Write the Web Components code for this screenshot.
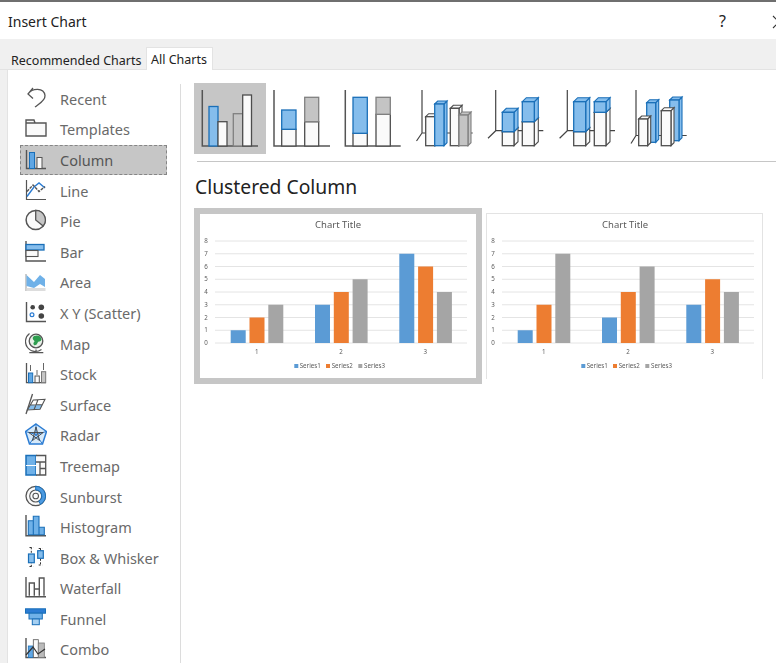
<!DOCTYPE html>
<html>
<head>
<meta charset="utf-8">
<title>Insert Chart</title>
<style>
  html, body { margin: 0; height: 100%; background: #fff; overflow: hidden; }
</style>
</head>
<body>
<insert-chart-dialog></insert-chart-dialog>
<script>
const FONT = '"Noto Sans", "Open Sans", "Liberation Sans", sans-serif';
const BLUE = '#85bdec';
const BLUE_LINE = '#1a6fb8';
const DARK = '#555';

// nav icons, drawn in a 22x24 box
const NAV_ICONS = {
  recent: `<path d="M8 1 3 7l5 4.500M3 7C7 1 19 0 20 8.500c.5 5-6 8.500-10 11.500" fill="none" stroke="${DARK}" stroke-width="1.300"/>`,
  templates: `<path d="M1 3h8l1 3h11v13H1zM1 6h9" fill="#fafafa" stroke="${DARK}" stroke-width="1.400"/>`,
  column: `<path d="M1.500 2v18.500H21" fill="none" stroke="${DARK}" stroke-width="1.400"/>
    <rect x="4.500" y="4.500" width="5" height="16" fill="#5fa6e4" stroke="${BLUE_LINE}"/>
    <rect x="12" y="9.500" width="5" height="11" fill="#fafafa" stroke="${DARK}"/>`,
  line: `<path d="M1.500 1v19.500H21" fill="none" stroke="${DARK}" stroke-width="1.200"/>
    <path d="M2 17.500 9 8l5-4 6 5" fill="none" stroke="#2b7cd3" stroke-width="1.400"/>
    <path d="M2 12.500 8 6l6 6.500L20 7.500" fill="none" stroke="${DARK}" stroke-width="1.400" stroke-dasharray="3 1"/>`,
  pie: `<circle cx="10.700" cy="11" r="9.600" fill="#fafafa" stroke="${DARK}" stroke-width="1.500"/>
    <path d="M10.700 11V1.400A9.600 9.600 0 0 1 18.200 17Z" fill="#c6c6c6" stroke="${DARK}" stroke-width="1.300"/>`,
  bar: `<path d="M1 1v20h20" fill="none" stroke="${DARK}" stroke-width="1.400"/>
    <rect x="1" y="4.500" width="18" height="5.500" fill="${BLUE}" stroke="${BLUE_LINE}" stroke-width="1.300"/>
    <rect x="1" y="10.500" width="12" height="6" fill="#fafafa" stroke="${DARK}" stroke-width="1.100"/>`,
  area: `<path d="M1 4v17" stroke="#999" fill="none"/>
    <path d="M1.500 18h19v3h-19z" fill="#ddd"/>
    <path d="M1.500 5 9 12l6-7 5 4v8l-5-3-6 4-7.500-2z" fill="#6fb1e8"/>`,
  scatter: `<path d="M1.500 1v19.500H21" fill="none" stroke="${DARK}" stroke-width="1.400"/>
    <circle cx="7.700" cy="6.300" r="2.300" fill="#444"/><circle cx="16.300" cy="6.300" r="2.800" fill="#444"/>
    <circle cx="16.300" cy="15" r="2.800" fill="#444"/><circle cx="7" cy="13.700" r="1.900" fill="#fff" stroke="#2b7cd3" stroke-width="1.200"/>`,
  map: `<circle cx="11" cy="9" r="6.800" fill="#e8f0e8" stroke="${DARK}" stroke-width="1.300"/>
    <path d="M9 4c4-1.500 7 0 7.500 3.500-1 3-3 1-4 3.500s-3.500 3-4 1 2-2 .5-3.500-2-3 0-4.500z" fill="#2e9e4f"/>
    <path d="M4.500 1.500a10 10 0 0 0 12 16M11 17.500v3M4.300 20.700h14" fill="none" stroke="${DARK}" stroke-width="1.200"/>`,
  stock: `<path d="M1.500 1v19.700H21" fill="none" stroke="${DARK}" stroke-width="1.300"/>
    <path d="M5.500 3v6M12 8v5M18.500 1v7" fill="none" stroke="${DARK}" stroke-width=".9"/>
    <rect x="3.500" y="11" width="4.200" height="9.700" fill="#5fa6e4" stroke="${BLUE_LINE}"/>
    <rect x="10" y="14" width="4.300" height="6.700" fill="#fafafa" stroke="${DARK}"/>
    <rect x="16.500" y="9.700" width="4.200" height="11" fill="#c6c6c6" stroke="#777"/>`,
  surface: `<path d="M7.500 1 1 21" fill="none" stroke="${DARK}" stroke-width="1.300"/>
    <path d="M5.500 12h12l-2.500 4.500H2.300z" fill="${BLUE}"/>
    <path d="M8.300 7 20 6.300 15 16.300 2.300 17zM5.500 12l12-.500M13 6.700 9 16.800" fill="none" stroke="${DARK}" stroke-width="1.100"/>`,
  radar: `<path d="m11 1 10.500 7.500-4 12.500h-13L.5 8.500z" fill="#d6e9f9" stroke="#2b7cd3" stroke-width="1.500"/>
    <path d="M11 1v10.500M21.500 8.500 11 11.500M17.500 21 11 11.500M4.500 21 11 11.500M.5 8.500 11 11.500" fill="none" stroke="#2b7cd3"/>
    <path d="m11 4 3.500 13.500L3.800 9.500h14.400L7.500 17.500z" fill="none" stroke="#444" stroke-width=".9"/>`,
  treemap: `<rect x="1" y="1.500" width="10" height="19.500" fill="#6fb1e8" stroke="${BLUE_LINE}" stroke-width="1.500"/>
    <path d="M1 11.500h10" stroke="#fff" fill="none"/>
    <path d="M11 1.500h9.700V21H11M11 8h9.700M15 8v13M15 14.500h5.700" fill="#fafafa" stroke="${DARK}" stroke-width="1.300"/>`,
  sunburst: `<circle cx="10.700" cy="11" r="9.700" fill="#fafafa" stroke="${DARK}" stroke-width="1.300"/>
    <circle cx="10.700" cy="11" r="6" fill="none" stroke="${DARK}" stroke-width="1.100"/>
    <circle cx="10.700" cy="11" r="2.800" fill="none" stroke="${DARK}" stroke-width="1.100"/>
    <path d="M10.700 1.300A9.700 9.700 0 0 1 15.500 19.500L13.700 16.200A6 6 0 0 0 10.700 5Z" fill="#4d9ae0" stroke="${BLUE_LINE}"/>`,
  histogram: `<path d="M1 0v20.700h20" fill="none" stroke="${DARK}" stroke-width="1.400"/>
    <path d="M3.300 19.700V5.700h5v14zM8.300 19.700V1.300H14v18.400zM14 19.700v-7.400h5.300v7.400z" fill="#6fb1e8" stroke="${BLUE_LINE}" stroke-width="1.100"/>`,
  box: `<path d="M6.300 1.300v19.400M15.500 2.300V19M4.500 1.500h3.600M4.500 20.500h3.600M13.700 2.500h3.600M13.700 19h3.600" fill="none" stroke="#333" stroke-dasharray="2 1.500"/>
    <rect x="3.500" y="8" width="5.800" height="8.700" fill="${BLUE}" stroke="${BLUE_LINE}" stroke-width="1.200"/>
    <rect x="12.700" y="4.700" width="5.600" height="7.600" fill="${BLUE}" stroke="${BLUE_LINE}" stroke-width="1.200"/>`,
  waterfall: `<path d="M1 1v19.700h20M4.300 19.700V7H9.300V19.700M9.300 13H14.300V2H19V19.700M14.300 13V19.700" fill="none" stroke="${DARK}" stroke-width="1.400"/>`,
  funnel: `<rect x="0.500" y="1.800" width="20" height="4.400" fill="#2b7cd3" stroke="${BLUE_LINE}"/>
    <rect x="4" y="6.200" width="13.300" height="5.800" fill="#6fb1e8" stroke="${BLUE_LINE}"/>
    <rect x="7.300" y="12" width="7" height="5.700" fill="#a6d0f2" stroke="${BLUE_LINE}"/>`,
  combo: `<path d="M1 1v19.500h20" fill="none" stroke="${DARK}" stroke-width="1.400"/>
    <rect x="3.300" y="9" width="5" height="11.500" fill="#5fa6e4" stroke="${BLUE_LINE}" stroke-width=".8"/>
    <rect x="8.300" y="2.700" width="5" height="17.800" fill="#fafafa" stroke="${DARK}" stroke-width=".8"/>
    <rect x="13.300" y="6" width="6" height="14.500" fill="#bbb" stroke="#777" stroke-width=".8"/>
    <path d="m1 18 7-8 5 7 7-5" fill="none" stroke="#333" stroke-width="1.200"/>`
};

const NAV_ITEMS = [
  ['recent', 'Recent'], ['templates', 'Templates'], ['column', 'Column'], ['line', 'Line'],
  ['pie', 'Pie'], ['bar', 'Bar'], ['area', 'Area'], ['scatter', 'X Y (Scatter)'], ['map', 'Map'],
  ['stock', 'Stock'], ['surface', 'Surface'], ['radar', 'Radar'], ['treemap', 'Treemap'],
  ['sunburst', 'Sunburst'], ['histogram', 'Histogram'], ['box', 'Box & Whisker'],
  ['waterfall', 'Waterfall'], ['funnel', 'Funnel'], ['combo', 'Combo']
];

const box2d = (x, y, w, h, fill, stroke = '#4d4d4d') =>
  `<rect x="${x}" y="${y}" width="${w}" height="${h}" fill="${fill}" stroke="${stroke}" stroke-width="1.300"/>`;

const box3d = (x, y, w, h, d, fill, stroke = '#4d4d4d') => `
  <path d="M${x + w} ${y}l${d} ${-d}v${h}l${-d} ${d}z" fill="${fill}" stroke="${stroke}" stroke-width="1.100"/>
  <path d="M${x} ${y}l${d} ${-d}h${w}l${-d} ${d}z" fill="${fill}" stroke="${stroke}" stroke-width="1.100"/>
  ${box2d(x, y, w, h, fill, stroke)}`;

const axes2d = (x, top, right) =>
  `<path d="M${x} ${top}V146H${right}" fill="none" stroke="#555" stroke-width="1.500"/>`;

const axes3d = (x, y, right, dx, dy) =>
  `<path d="M${x} 90V${y}H${right}M${x} ${y}l${-dx} ${dy}" fill="none" stroke="#444" stroke-width="1.200"/>`;

// subtype thumbs, in reference coordinates so the numbers stay readable
const THUMBS = [
  { x: 194, selected: true, draw: axes2d(202.300, 90, 258) +
      box2d(209, 106.500, 9, 39.500, BLUE, BLUE_LINE) + box2d(218, 121.700, 9, 24.300, '#fafafa') +
      box2d(233.300, 113.700, 9.400, 32.300, '#c4c4c4', '#808080') + box2d(242.700, 95, 8.800, 51, '#fafafa') },
  { x: 266, draw: axes2d(274, 90, 330) +
      box2d(281.700, 129.300, 14.300, 16.700, '#fafafa') + box2d(281.700, 110, 14.300, 19.300, BLUE, BLUE_LINE) +
      box2d(304.700, 121.700, 14, 24.300, '#fafafa') + box2d(304.700, 97.300, 14, 24.400, '#c4c4c4', '#808080') },
  { x: 337, draw: axes2d(345.300, 90, 400.700) +
      box2d(353, 133.300, 14.300, 12.700, '#fafafa') + box2d(353, 97.300, 14.300, 36, BLUE, BLUE_LINE) +
      box2d(376, 114.300, 14.300, 31.700, '#fafafa') + box2d(376, 97.300, 14.300, 17, '#c4c4c4', '#808080') },
  { x: 409, draw: axes3d(422, 133, 472.700, 5.500, 8) +
      box3d(425.700, 116.700, 9.300, 29, 3, '#fafafa') + box3d(434.700, 104, 9.300, 41.700, 3, BLUE, BLUE_LINE) +
      box3d(450.300, 108.300, 8.700, 37.400, 3, '#fafafa') + box3d(459, 115, 9, 30.700, 3, '#c4c4c4', '#808080') },
  { x: 480, draw: axes3d(495.700, 130.700, 543.300, 7.700, 7.500) +
      box3d(502.300, 131.700, 11.700, 14, 4, '#fafafa') + box3d(502.300, 112.300, 11.700, 19.400, 4, BLUE, BLUE_LINE) +
      box3d(522.300, 121.700, 12, 24, 4, '#fafafa') + box3d(522.300, 101.700, 12, 20, 4, BLUE, BLUE_LINE) },
  { x: 552, draw: axes3d(567.300, 130.700, 615, 7.700, 7.500) +
      box3d(573.700, 131.700, 12, 14, 4, '#fafafa') + box3d(573.700, 101.700, 12, 30, 4, BLUE, BLUE_LINE) +
      box3d(594.300, 112.300, 11.700, 33.400, 4, '#fafafa') + box3d(594.300, 101.700, 11.700, 10.600, 4, BLUE, BLUE_LINE) },
  { x: 623, draw: axes3d(636, 135.500, 686.700, 5, 8) +
      box3d(646.700, 102.700, 9, 39.600, 3, BLUE, BLUE_LINE) + box3d(669.700, 100, 9.300, 40.700, 3, BLUE, BLUE_LINE) +
      box3d(638.700, 119, 9, 26.700, 3, '#fafafa') + box3d(661.300, 110.700, 9.700, 35, 3, '#fafafa') }
];

class DialogTitle extends HTMLElement {
  constructor() {
    super();
    this.attachShadow({ mode: 'open' });
    this.shadowRoot.innerHTML = `
      <style>
        :host {
          display: flex;
          align-items: center;
          height: 37px;
          border-top: 2px solid #6f6f6f;
          padding-left: 8px;
          padding-top: 1px;
          box-sizing: content-box;
          background: #fff;
          color: #222;
          font-size: 14px;
          overflow: hidden;
          margin-bottom: -1px;
        }
        .name { flex: 1; }
        .help { font-size: 16px; width: 53px; margin-top: -2px; }
        svg { display: block; width: 14px; height: 14px; flex: none; margin-right: -10px; }
      </style>
      <span class="name"><slot></slot></span>
      <span class="help">?</span>
      <svg viewBox="0 0 14 14"><path d="M1 1l12 12M13 1 1 13" stroke="#333" stroke-width="1.100" fill="none"/></svg>
    `;
  }
}

class ChartTabs extends HTMLElement {
  constructor() {
    super();
    this.attachShadow({ mode: 'open' });
    this.shadowRoot.innerHTML = `
      <style>
        :host {
          display: flex;
          align-items: flex-end;
          height: 31px;
          box-sizing: border-box;
          padding-left: 7px;
          background: #f0f0f0;
          border-bottom: 1px solid #e3e3e3;
          font-size: 12.500px;
          color: #222;
        }
        .tab { display: flex; align-items: center; box-sizing: border-box; white-space: nowrap; }
        .off { height: 19px; padding: 1px 0 0 4px; width: 139px; }
        .on {
          height: 23px;
          width: 67px;
          margin-bottom: -1px;
          padding: 0 0 0 4px;
          background: #fff;
          border: 1px solid #e3e3e3;
          border-bottom: none;
        }
      </style>
      <span class="tab off">Recommended Charts</span>
      <span class="tab on">All Charts</span>
    `;
  }
}

class NavItem extends HTMLElement {
  connectedCallback() {
    if (this.shadowRoot) return;
    this.attachShadow({ mode: 'open' });
    this.shadowRoot.innerHTML = `
      <style>
        :host {
          display: flex;
          align-items: center;
          gap: 13px;
          height: 30.600px;
          box-sizing: border-box;
          padding-left: 4px;
          border: 1px solid transparent;
          color: #6a6a6a;
          font-size: 14.500px;
        }
        :host([selected]) {
          background: #c6c6c6;
          border: 1px dashed #858585;
          color: #555;
        }
        svg { display: block; width: 22px; height: 24px; flex: none; }
      </style>
      <svg viewBox="0 0 22 24">${NAV_ICONS[this.getAttribute('icon')]}</svg>
      <slot></slot>
    `;
  }
}

class ChartNav extends HTMLElement {
  constructor() {
    super();
    this.attachShadow({ mode: 'open' });
    this.shadowRoot.innerHTML = `
      <style>
        :host {
          display: block;
          width: 174px;
          box-sizing: border-box;
          margin-top: 13.500px;
          padding-left: 13px;
          padding-right: 13px;
          border-right: 1px solid #dcdcdc;
        }
      </style>
      <slot></slot>
    `;
  }
}

class SubtypeThumb extends HTMLElement {
  set thumb(thumb) {
    this._thumb = thumb;
    this.render();
  }

  render() {
    if (!this.shadowRoot) this.attachShadow({ mode: 'open' });
    this.shadowRoot.innerHTML = `
      <style>
        :host { display: block; width: 71.500px; height: 71px; flex: none; }
        :host([selected]) { background: #c6c6c6; }
        svg { display: block; width: 100%; height: 100%; }
      </style>
      <svg viewBox="${this._thumb.x} 83 71.500 71">${this._thumb.draw}</svg>
    `;
  }
}

class SubtypeStrip extends HTMLElement {
  constructor() {
    super();
    this.attachShadow({ mode: 'open' });
    this.shadowRoot.innerHTML = `
      <style>
        :host {
          display: flex;
          height: 79px;
          box-sizing: border-box;
          margin-left: 3px;
          border-bottom: 1px solid #c6c6c6;
        }
        .row { display: flex; margin-left: -3px; }
      </style>
      <div class="row"></div>
    `;
    const row = this.shadowRoot.querySelector('.row');
    THUMBS.forEach(t => {
      const el = document.createElement('subtype-thumb');
      if (t.selected) el.setAttribute('selected', '');
      el.thumb = t;
      row.appendChild(el);
    });
  }
}

class ChartPreview extends HTMLElement {
  set values(values) {
    this._values = values;
    this.render();
  }

  render() {
    const gridY = v => 27 + (8 - v) * 12.75;
    const colors = ['#5b9bd5', '#ed7d31', '#a5a5a5'];
    let grid = '';
    for (let v = 0; v <= 8; v++) {
      grid += `<line x1="15" x2="267" y1="${gridY(v)}" y2="${gridY(v)}" stroke="#e4e4e4"/>
        <text x="6" y="${gridY(v) + 2}" text-anchor="middle">${v}</text>`;
    }
    let bars = '';
    this._values.forEach((group, i) => {
      group.forEach((v, j) => {
        bars += `<rect x="${30.700 + 84.300 * i + 18.800 * j}" y="${gridY(v)}" width="15" height="${v * 12.75}" fill="${colors[j]}"/>`;
      });
      bars += `<text x="${56.700 + 84.300 * i}" y="139.500" text-anchor="middle">${i + 1}</text>`;
    });
    const legend = [[94.300, 99.700], [126, 131.700], [158.300, 164]].map(([m, t], j) =>
      `<rect x="${m}" y="150" width="4" height="4" fill="${colors[j]}"/><text x="${t}" y="154">Series${j + 1}</text>`
    ).join('');

    if (!this.shadowRoot) this.attachShadow({ mode: 'open' });
    this.shadowRoot.innerHTML = `
      <style>
        :host {
          display: block;
          flex: none;
          box-sizing: border-box;
          width: 277px;
          height: 166px;
          margin-top: 5px;
          border: 1px solid #e3e3e3;
          border-bottom: none;
          background: #fff;
          overflow: hidden;
        }
        :host([selected]) {
          width: 288px;
          height: 176px;
          margin-top: 0;
          border: 6px solid #c6c6c6;
        }
        svg { display: block; width: 276px; height: 165px; filter: blur(.3px); }
        text { font-family: ${FONT}; font-size: 6.200px; fill: #5c5c5c; }
        .title { font-size: 9.500px; fill: #595959; }
      </style>
      <svg viewBox="0 0 276 165">
        <text class="title" x="138" y="14" text-anchor="middle">Chart Title</text>
        ${grid}${bars}${legend}
      </svg>
    `;
  }
}

class InsertChartDialog extends HTMLElement {
  constructor() {
    super();
    this.attachShadow({ mode: 'open' });
    this.shadowRoot.innerHTML = `
      <style>
        :host {
          display: block;
          width: 776px;
          height: 663px;
          overflow: hidden;
          background: #f0f0f0;
          font-family: ${FONT};
        }
        main {
          display: flex;
          height: 593px;
          margin-left: 7px;
          background: #fff;
          border-left: 1px solid #e3e3e3;
        }
        chart-nav { margin-left: -1px; }
        .panel { flex: 1; min-width: 0; margin-top: 13px; padding-left: 13px; overflow: hidden; }
        h2 {
          margin: 10px 0 6px 1px;
          font-size: 19.300px;
          line-height: 30px;
          font-weight: 400;
          color: #222;
        }
        .previews { display: flex; gap: 4px; }
      </style>
      <dialog-title>Insert Chart</dialog-title>
      <chart-tabs></chart-tabs>
      <main>
        <chart-nav>
          ${NAV_ITEMS.map(([icon, label]) =>
            `<nav-item icon="${icon}"${icon === 'column' ? ' selected' : ''}>${label.replace('&', '&amp;')}</nav-item>`
          ).join('')}
        </chart-nav>
        <div class="panel">
          <subtype-strip></subtype-strip>
          <h2>Clustered Column</h2>
          <div class="previews">
            <chart-preview selected id="byColumn"></chart-preview>
            <chart-preview id="byRow"></chart-preview>
          </div>
        </div>
      </main>
    `;
  }

  connectedCallback() {
    this.shadowRoot.getElementById('byColumn').values = [[1, 2, 3], [3, 4, 5], [7, 6, 4]];
    this.shadowRoot.getElementById('byRow').values = [[1, 3, 7], [2, 4, 6], [3, 5, 4]];
  }
}

customElements.define('dialog-title', DialogTitle);
customElements.define('chart-tabs', ChartTabs);
customElements.define('nav-item', NavItem);
customElements.define('chart-nav', ChartNav);
customElements.define('subtype-thumb', SubtypeThumb);
customElements.define('subtype-strip', SubtypeStrip);
customElements.define('chart-preview', ChartPreview);
customElements.define('insert-chart-dialog', InsertChartDialog);
</script>
</body>
</html>
